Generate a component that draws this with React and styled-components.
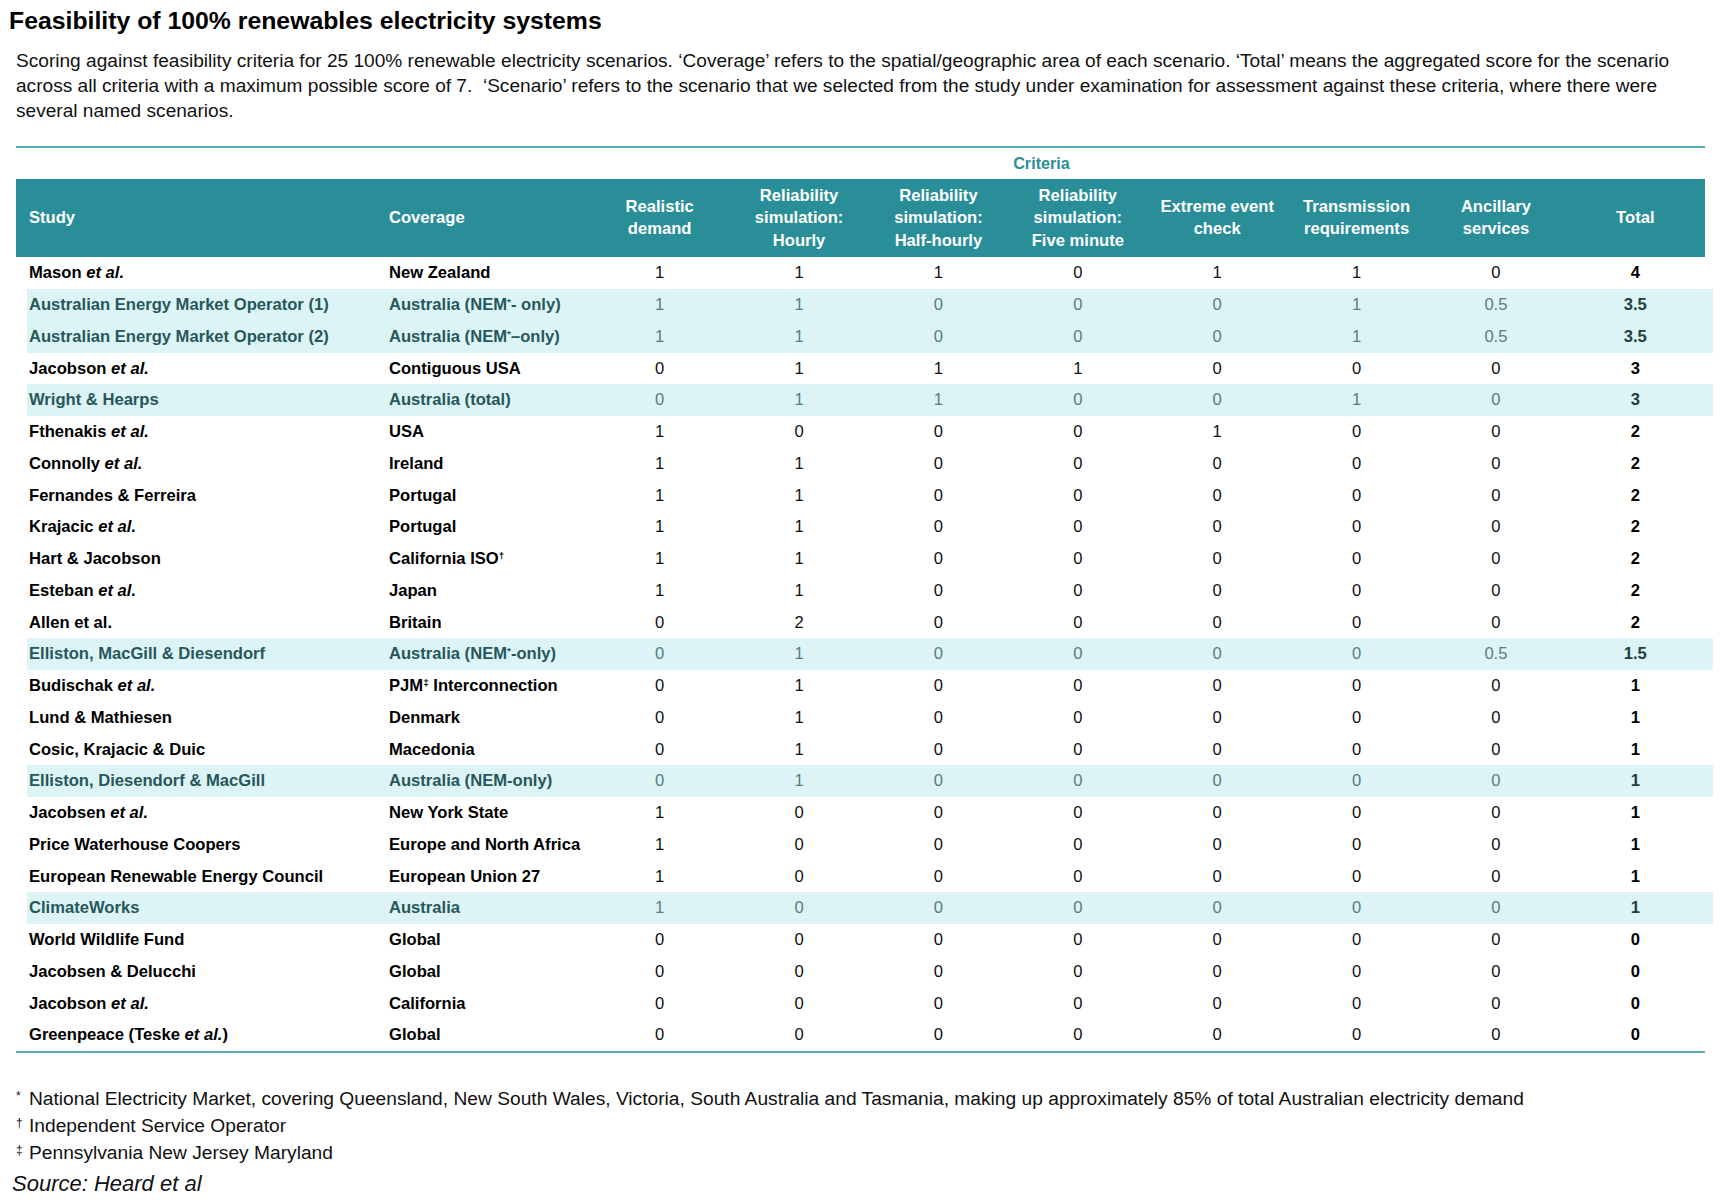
import React from 'react';
import styled, { createGlobalStyle } from 'styled-components';

const Global = createGlobalStyle`
  html, body { margin: 0; padding: 0; background: #fff; }
  body { font-family: "Liberation Sans", Arial, sans-serif; color: #000; }
`;

const COLS = '362px 212px repeat(8, 139.375px)';
const TEAL = '#2a8e98';

const Page = styled.div`
  width: 1727px;
  padding: 6px 0 0 16px;
  box-sizing: border-box;
`;

const Title = styled.h1`
  margin: 0 0 0 -7px;
  font-size: 24.8px;
  line-height: 30px;
  font-weight: 700;
  color: #000;
`;

const Intro = styled.p`
  margin: 13px 0 0 0;
  font-size: 19.1px;
  line-height: 24.8px;
  color: #111;
  white-space: nowrap;
`;

const Rule = styled.div`
  width: 1689px;
  height: 2px;
  background: #5aacb3;
  margin-top: 23px;
`;

const Table = styled.div`
  width: 1689px;
`;

const CriteriaRow = styled.div`
  display: grid;
  grid-template-columns: 362px 1fr;
  height: 31px;
  align-items: center;
`;

const CriteriaLabel = styled.div`
  grid-column: 2;
  text-align: center;
  color: ${TEAL};
  font-weight: 700;
  font-size: 16.2px;
`;

const HeaderRow = styled.div`
  display: grid;
  grid-template-columns: ${COLS};
  height: 78px;
  background: ${TEAL};
  color: #fff;
  font-weight: 700;
  font-size: 16.6px;
  line-height: 22.5px;
`;

const HeadCell = styled.div`
  display: flex;
  align-items: center;
  justify-content: ${p => (p.$left ? 'flex-start' : 'center')};
  text-align: ${p => (p.$left ? 'left' : 'center')};
  padding-left: ${p => p.$pad || 0}px;
`;

const Body = styled.div`
  border-bottom: 2px solid #5aacb3;
`;

const Row = styled.div`
  display: grid;
  grid-template-columns: ${COLS};
  height: 31.76px;
  font-size: 16.6px;
  margin-right: ${p => (p.$hl ? '-8px' : '0')};
  padding-right: ${p => (p.$hl ? '8px' : '0')};
  background: ${p => (p.$hl ? 'linear-gradient(to right, transparent 11px, #dcf4f5 11px)' : 'transparent')};
`;

const NameCell = styled.div`
  display: flex;
  align-items: center;
  padding-left: ${p => p.$pad}px;
  font-weight: 700;
  color: ${p => (p.$hl ? '#27575b' : '#000')};
  white-space: nowrap;
  em { font-style: italic; }
`;

const NumCell = styled.div`
  display: flex;
  align-items: center;
  justify-content: center;
  font-weight: ${p => (p.$bold ? 700 : 400)};
  color: ${p => (p.$bold ? (p.$hl ? '#1d3f42' : '#000') : p.$hl ? '#5a7c7f' : '#111')};
`;

const Sup = styled.sup`
  font-size: 60%;
  line-height: 0;
  vertical-align: 0.55em;
`;

const Notes = styled.div`
  margin-top: 32px;
  font-size: 19.2px;
  line-height: 27px;
  color: #111;
`;

const Note = styled.div`
  white-space: nowrap;
`;

const Mark = styled.span`
  display: inline-block;
  width: 13px;
  font-size: 12px;
  line-height: 1;
  vertical-align: 0.45em;
`;

const Source = styled.div`
  margin: 4px 0 0 -4px;
  font-size: 22px;
  line-height: 27px;
  font-style: italic;
  color: #111;
`;

const rows = [
  [<>Mason <em>et al.</em></>, 'New Zealand', [1, 1, 1, 0, 1, 1, 0], '4'],
  ['Australian Energy Market Operator (1)', <>Australia (NEM<Sup>*</Sup>- only)</>, [1, 1, 0, 0, 0, 1, '0.5'], '3.5', true],
  ['Australian Energy Market Operator (2)', <>Australia (NEM<Sup>*</Sup>–only)</>, [1, 1, 0, 0, 0, 1, '0.5'], '3.5', true],
  [<>Jacobson <em>et al.</em></>, 'Contiguous USA', [0, 1, 1, 1, 0, 0, 0], '3'],
  ['Wright & Hearps', 'Australia (total)', [0, 1, 1, 0, 0, 1, 0], '3', true],
  [<>Fthenakis <em>et al.</em></>, 'USA', [1, 0, 0, 0, 1, 0, 0], '2'],
  [<>Connolly <em>et al.</em></>, 'Ireland', [1, 1, 0, 0, 0, 0, 0], '2'],
  ['Fernandes & Ferreira', 'Portugal', [1, 1, 0, 0, 0, 0, 0], '2'],
  [<>Krajacic <em>et al.</em></>, 'Portugal', [1, 1, 0, 0, 0, 0, 0], '2'],
  ['Hart & Jacobson', <>California ISO<Sup>†</Sup></>, [1, 1, 0, 0, 0, 0, 0], '2'],
  [<>Esteban <em>et al.</em></>, 'Japan', [1, 1, 0, 0, 0, 0, 0], '2'],
  ['Allen et al.', 'Britain', [0, 2, 0, 0, 0, 0, 0], '2'],
  ['Elliston, MacGill & Diesendorf', <>Australia (NEM<Sup>*</Sup>-only)</>, [0, 1, 0, 0, 0, 0, '0.5'], '1.5', true],
  [<>Budischak <em>et al.</em></>, <>PJM<Sup>‡</Sup> Interconnection</>, [0, 1, 0, 0, 0, 0, 0], '1'],
  ['Lund & Mathiesen', 'Denmark', [0, 1, 0, 0, 0, 0, 0], '1'],
  ['Cosic, Krajacic & Duic', 'Macedonia', [0, 1, 0, 0, 0, 0, 0], '1'],
  ['Elliston, Diesendorf & MacGill', 'Australia (NEM-only)', [0, 1, 0, 0, 0, 0, 0], '1', true],
  [<>Jacobsen <em>et al.</em></>, 'New York State', [1, 0, 0, 0, 0, 0, 0], '1'],
  ['Price Waterhouse Coopers', 'Europe and North Africa', [1, 0, 0, 0, 0, 0, 0], '1'],
  ['European Renewable Energy Council', 'European Union 27', [1, 0, 0, 0, 0, 0, 0], '1'],
  ['ClimateWorks', 'Australia', [1, 0, 0, 0, 0, 0, 0], '1', true],
  ['World Wildlife Fund', 'Global', [0, 0, 0, 0, 0, 0, 0], '0'],
  ['Jacobsen & Delucchi', 'Global', [0, 0, 0, 0, 0, 0, 0], '0'],
  [<>Jacobson <em>et al.</em></>, 'California', [0, 0, 0, 0, 0, 0, 0], '0'],
  [<>Greenpeace (Teske <em>et al.</em>)</>, 'Global', [0, 0, 0, 0, 0, 0, 0], '0'],
];

const headers = [
  <>Realistic<br />demand</>,
  <>Reliability<br />simulation:<br />Hourly</>,
  <>Reliability<br />simulation:<br />Half-hourly</>,
  <>Reliability<br />simulation:<br />Five minute</>,
  <>Extreme event<br />check</>,
  <>Transmission<br />requirements</>,
  <>Ancillary<br />services</>,
  <>Total</>,
];

export default function App() {
  return (
    <>
      <Global />
      <Page>
        <Title>Feasibility of 100% renewables electricity systems</Title>
        <Intro>
          Scoring against feasibility criteria for 25 100% renewable electricity scenarios. ‘Coverage’ refers to the spatial/geographic area of each scenario. ‘Total’ means the aggregated score for the scenario
          <br />
          across all criteria with a maximum possible score of 7.&nbsp; ‘Scenario’ refers to the scenario that we selected from the study under examination for assessment against these criteria, where there were
          <br />
          several named scenarios.
        </Intro>
        <Rule />
        <Table>
          <CriteriaRow>
            <CriteriaLabel>Criteria</CriteriaLabel>
          </CriteriaRow>
          <HeaderRow>
            <HeadCell $left $pad={13}>Study</HeadCell>
            <HeadCell $left $pad={11}>Coverage</HeadCell>
            {headers.map((h, i) => (
              <HeadCell key={i}><span>{h}</span></HeadCell>
            ))}
          </HeaderRow>
          <Body>
            {rows.map(([study, cov, vals, total, hl], i) => (
              <Row key={i} $hl={hl}>
                <NameCell $pad={13} $hl={hl}><span>{study}</span></NameCell>
                <NameCell $pad={11} $hl={hl}><span>{cov}</span></NameCell>
                {vals.map((v, j) => (
                  <NumCell key={j} $hl={hl}>{v}</NumCell>
                ))}
                <NumCell $bold $hl={hl}>{total}</NumCell>
              </Row>
            ))}
          </Body>
        </Table>
        <Notes>
          <Note><Mark>*</Mark>National Electricity Market, covering Queensland, New South Wales, Victoria, South Australia and Tasmania, making up approximately 85% of total Australian electricity demand</Note>
          <Note><Mark>†</Mark>Independent Service Operator</Note>
          <Note><Mark>‡</Mark>Pennsylvania New Jersey Maryland</Note>
        </Notes>
        <Source>Source: Heard et al</Source>
      </Page>
    </>
  );
}
